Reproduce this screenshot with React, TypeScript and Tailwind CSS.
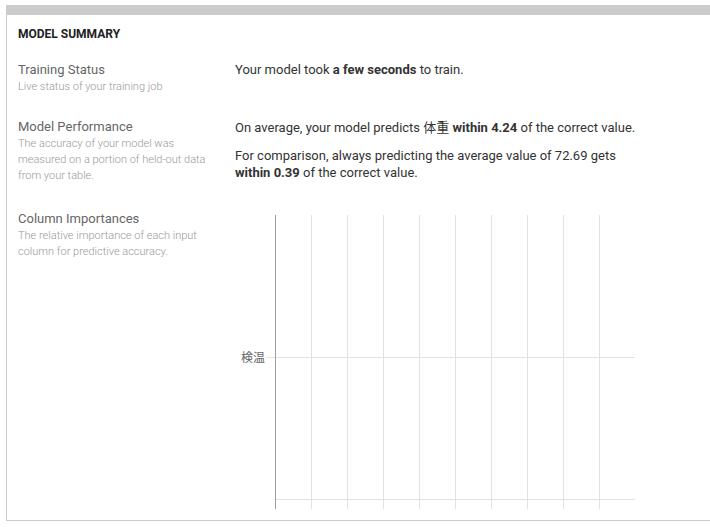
const ticks = [1, 2, 3, 4, 5, 6, 7, 8, 9];

function ImportanceChart() {
  return (
    <svg width="410" height="294" className="block">
      {ticks.map((k) => (
        <line
          key={k}
          x1={40.5 + 36 * k}
          x2={40.5 + 36 * k}
          y1={0}
          y2={294}
          stroke="#e2e2e2"
          strokeWidth={1}
        />
      ))}
      <line x1={31} x2={400} y1={142.5} y2={142.5} stroke="#e2e2e2" strokeWidth={1} />
      <line x1={40} x2={400} y1={284.5} y2={284.5} stroke="#e2e2e2" strokeWidth={1} />
      <line x1={40.5} x2={40.5} y1={0} y2={294} stroke="#9e9e9e" strokeWidth={1} />
      <text
        x={30}
        y={146.5}
        textAnchor="end"
        fontSize={12}
        fill="#666"
        fontFamily="Roboto, 'Noto Sans CJK JP', sans-serif"
      >
        検温
      </text>
    </svg>
  );
}

function Row({
  title,
  desc,
  className,
  children,
}: {
  title: string;
  desc: string;
  className?: string;
  children: React.ReactNode;
}) {
  return (
    <div className={`flex ${className ?? ''}`}>
      <div className="w-[217px] shrink-0 pr-4">
        <div className="text-[13px] leading-[17px] text-[#666]">{title}</div>
        <div className="mt-[1px] text-[11px] font-light leading-[16px] text-[#999]">{desc}</div>
      </div>
      <div className="flex-1 text-[13px] leading-[17px] text-[#333]">{children}</div>
    </div>
  );
}

export default function App() {
  return (
    <div
      className="h-[527px] w-[710px] overflow-hidden bg-white pl-[6px] pt-[5px]"
      style={{ fontFamily: "Roboto, 'Noto Sans CJK JP', sans-serif" }}
    >
      <div className="box-border h-[516px] w-[720px] border-b border-l border-t-[10px] border-[#cccccc] pl-[11px] pt-[11px]">
        <h2 className="text-[12px] font-bold leading-[16px] text-[#212121]">MODEL SUMMARY</h2>

        <Row title="Training Status" desc="Live status of your training job" className="mt-[19px]">
          <p>
            Your model took <b>a few seconds</b> to train.
          </p>
        </Row>

        <Row
          title="Model Performance"
          desc="The accuracy of your model was measured on a portion of held-out data from your table."
          className="mt-[23px]"
        >
          <p className="mt-[1px]">
            On average, your model predicts 体重 <b>within 4.24</b> of the correct value.
          </p>
          <p className="mt-[11px]">
            For comparison, always predicting the average value of 72.69 gets
            <br />
            <b>within 0.39</b> of the correct value.
          </p>
        </Row>

        <Row
          title="Column Importances"
          desc="The relative importance of each input column for predictive accuracy."
          className="mt-[26px]"
        >
          <div className="mt-[5px]">
            <ImportanceChart />
          </div>
        </Row>
      </div>
    </div>
  );
}
